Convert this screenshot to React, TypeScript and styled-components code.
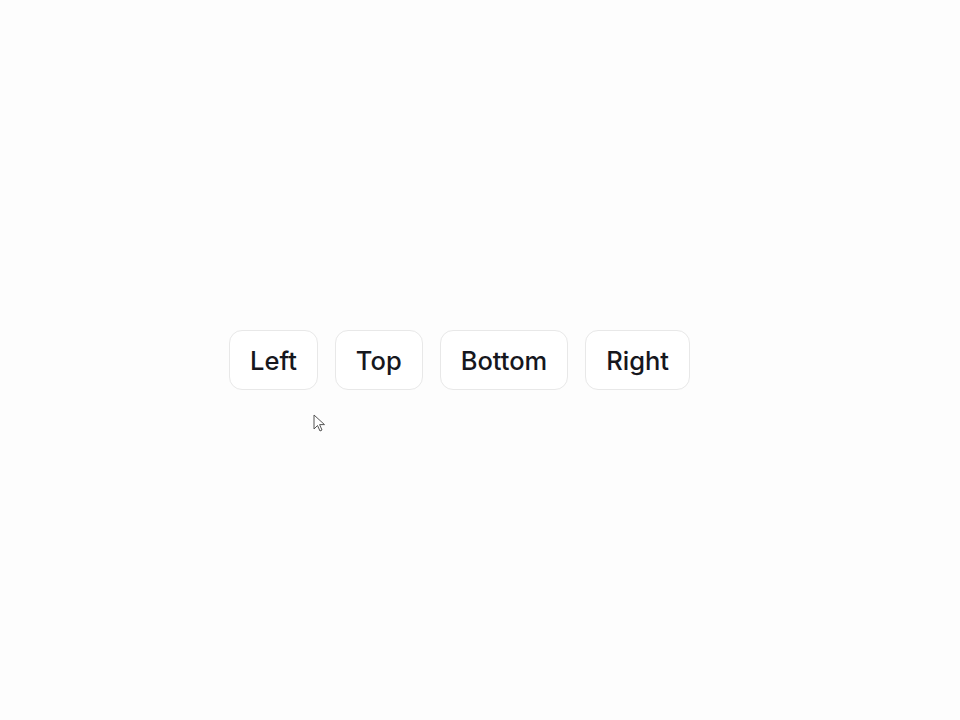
import styled, { createGlobalStyle } from "styled-components";

const GlobalStyle = createGlobalStyle`
  html, body {
    margin: 0;
    padding: 0;
    background: #fdfdfd;
  }
`;

const Page = styled.div`
  position: relative;
  width: 960px;
  height: 720px;
  font-family: "Inter", "Open Sans", sans-serif;
`;

const Row = styled.div`
  display: flex;
  gap: 17px;
  padding: 330px 0 0 229px;
`;

const Button = styled.button`
  height: 60px;
  padding: 0 20px;
  background: #ffffff;
  border: 1.5px solid #e8e8e8;
  border-radius: 13px;
  font-family: inherit;
  font-size: 25.5px;
  font-weight: 500;
  color: #16171d;
  cursor: pointer;
`;

const Cursor = styled.svg`
  position: absolute;
  left: 313px;
  top: 414px;
`;

const sides = ["Left", "Top", "Bottom", "Right"];

export default function App() {
  return (
    <Page>
      <GlobalStyle />
      <Row>
        {sides.map((s) => (
          <Button key={s}>{s}</Button>
        ))}
      </Row>
      <Cursor width="14" height="20" viewBox="0 0 14 20">
        <path
          d="M1 1 L1 15 L4.5 11.5 L7 17 L9 16 L6.6 10.6 L11.5 10.6 Z"
          fill="#fff"
          stroke="#555"
          strokeWidth="1"
          strokeLinejoin="round"
        />
      </Cursor>
    </Page>
  );
}
